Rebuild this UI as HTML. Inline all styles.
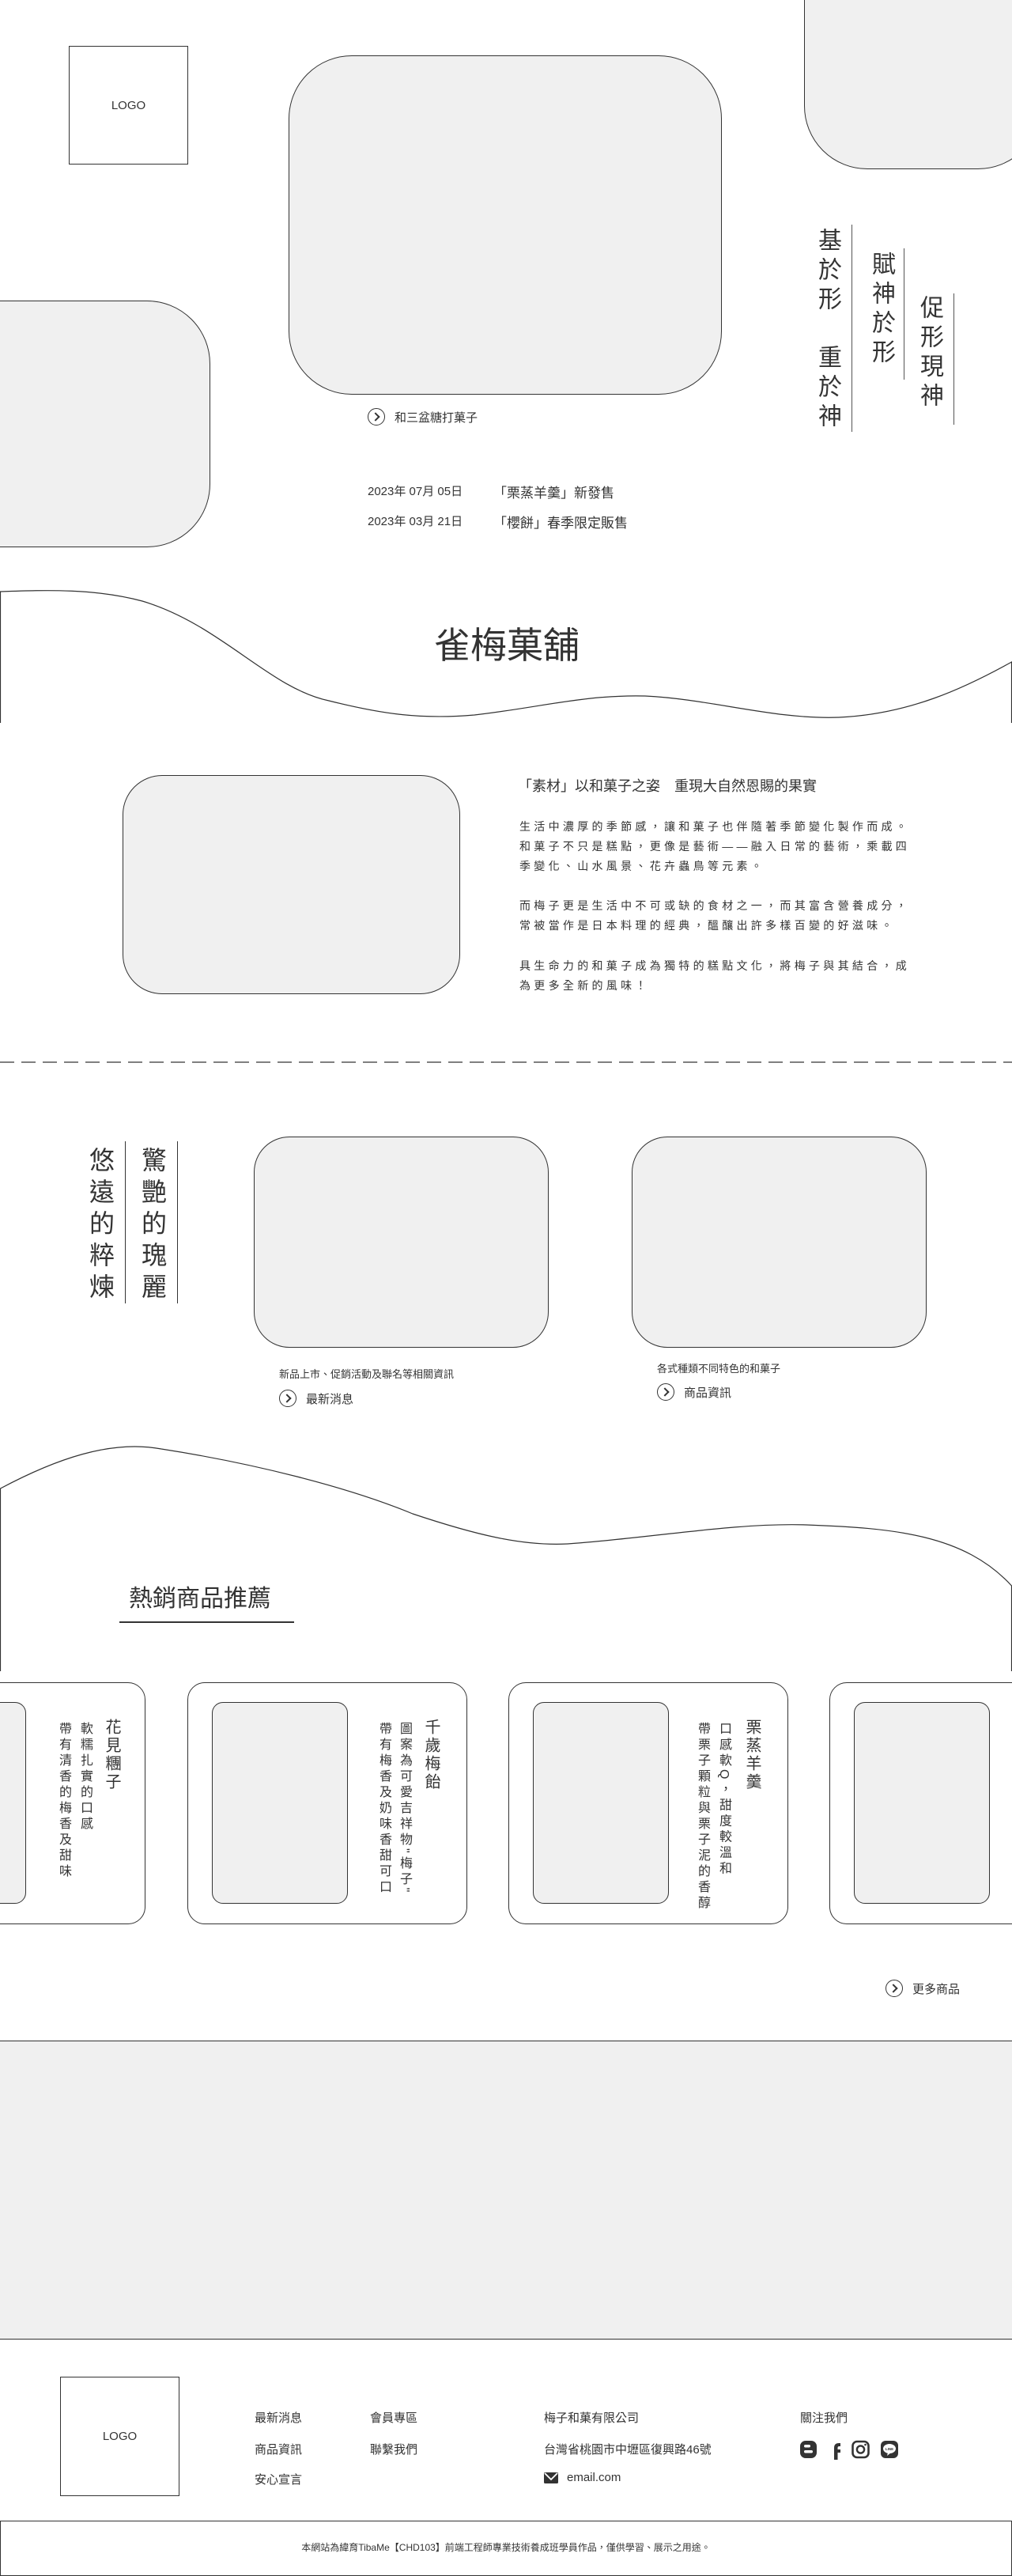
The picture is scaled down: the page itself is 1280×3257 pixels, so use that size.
<!DOCTYPE html>
<html><head><meta charset="utf-8">
<style>
*{margin:0;padding:0;box-sizing:border-box}
body{width:1280px;height:3251px;position:relative;background:#fff;color:#333;font-family:"Liberation Sans","Noto Sans CJK TC",sans-serif;overflow:hidden}
.a{position:absolute}
.img{position:absolute;background:#f0f0f0;border:1px solid #333}
.v{position:absolute;writing-mode:vertical-rl;white-space:nowrap}
.btn{position:absolute;display:flex;align-items:center;font-size:15px;white-space:nowrap}
.btn i{display:inline-block;width:22px;height:22px;border:1.5px solid #333;border-radius:50%;margin-right:12px;position:relative}
.btn i:after{content:"";position:absolute;left:5px;top:6px;width:6px;height:6px;border-right:2px solid #333;border-top:2px solid #333;transform:rotate(45deg)}
.p{font-size:14px;letter-spacing:4.3px;line-height:25px;white-space:nowrap}
.foot{position:absolute;font-size:15px;white-space:nowrap}
</style></head><body>

<div class="a" style="left:87px;top:58px;width:151px;height:150px;border:1px solid #333;display:flex;align-items:center;justify-content:center;font-size:15px">LOGO</div>
<div class="img" style="left:365px;top:70px;width:548px;height:429px;border-radius:80px"></div>
<div class="img" style="left:1017px;top:-90px;width:300px;height:304px;border-radius:80px"></div>
<div class="img" style="left:-100px;top:380px;width:366px;height:312px;border-radius:80px"></div>
<div class="btn" style="left:465px;top:516px"><i></i>和三盆糖打菓子</div>
<div class="a" style="left:465px;top:610px;font-size:15px;white-space:nowrap">2023年 07月 05日</div>
<div class="a" style="left:624px;top:609px;font-size:17px;white-space:nowrap">「栗蒸羊羹」新發售</div>
<div class="a" style="left:465px;top:648px;font-size:15px;white-space:nowrap">2023年 03月 21日</div>
<div class="a" style="left:624px;top:647px;font-size:17px;white-space:nowrap">「櫻餅」春季限定販售</div>

<div class="v" style="left:1029px;top:288px;font-size:30px;letter-spacing:7px;line-height:34px">基於形　重於神</div>
<div class="a" style="left:1077px;top:284px;width:1px;height:262px;background:#555"></div>
<div class="v" style="left:1097px;top:318px;font-size:30px;letter-spacing:7px;line-height:34px">賦神於形</div>
<div class="a" style="left:1143px;top:314px;width:1px;height:166px;background:#555"></div>
<div class="v" style="left:1158px;top:373px;font-size:30px;letter-spacing:7px;line-height:34px">促形現神</div>
<div class="a" style="left:1206px;top:371px;width:1px;height:166px;background:#555"></div>

<svg class="a" style="left:0;top:0" width="1280" height="3251" viewBox="0 0 1280 3251">
<g fill="none" stroke="#333" stroke-width="1.2">
<path d="M0.5,914 V748 C60,746 120,744 180,760 C280,790 340,870 416,886 C480,902 530,910 600,904 C680,895 740,878 816,880 C900,884 980,910 1061,907 C1150,903 1220,870 1279.5,837 V914"/>
<path d="M0.5,2113 V1882 C70,1845 140,1820 204,1832 C320,1850 440,1880 522,1914 C600,1940 660,1955 718,1952 C820,1945 930,1925 1020,1928 C1130,1932 1220,1940 1279.5,2005 V2113"/>
<line x1="0" y1="1343" x2="1280" y2="1343" stroke-dasharray="18 9"/>
</g>
</svg>
<div class="a" style="left:0;width:1280px;top:780px;text-align:center;font-size:46px;padding-left:2px">雀梅菓舖</div>

<div class="img" style="left:155px;top:980px;width:427px;height:277px;border-radius:50px"></div>
<div class="a" style="left:655px;top:980px;font-size:18px;white-space:nowrap">「素材」以和菓子之姿　重現大自然恩賜的果實</div>
<div class="a p" style="left:657px;top:1033px">生活中濃厚的季節感，讓和菓子也伴隨著季節變化製作而成。<br>和菓子不只是糕點，更像是藝術——融入日常的藝術，乘載四<br>季變化、山水風景、花卉蟲鳥等元素。</div>
<div class="a p" style="left:657px;top:1133px">而梅子更是生活中不可或缺的食材之一，而其富含營養成分，<br>常被當作是日本料理的經典，醞釀出許多樣百變的好滋味。</div>
<div class="a p" style="left:657px;top:1209px">具生命力的和菓子成為獨特的糕點文化，將梅子與其結合，成<br>為更多全新的風味！</div>

<div class="v" style="left:109px;top:1450px;font-size:32px;letter-spacing:8px;line-height:36px">悠遠的粹煉</div>
<div class="a" style="left:158px;top:1443px;width:1px;height:205px;background:#333"></div>
<div class="v" style="left:175px;top:1450px;font-size:32px;letter-spacing:8px;line-height:36px">驚艷的瑰麗</div>
<div class="a" style="left:224px;top:1443px;width:1px;height:205px;background:#333"></div>
<div class="img" style="left:321px;top:1437px;width:373px;height:267px;border-radius:45px"></div>
<div class="img" style="left:799px;top:1437px;width:373px;height:267px;border-radius:45px"></div>
<div class="a" style="left:353px;top:1727px;font-size:13px;white-space:nowrap">新品上市、促銷活動及聯名等相關資訊</div>
<div class="btn" style="left:353px;top:1757px"><i></i>最新消息</div>
<div class="a" style="left:831px;top:1720px;font-size:13px;white-space:nowrap">各式種類不同特色的和菓子</div>
<div class="btn" style="left:831px;top:1749px"><i></i>商品資訊</div>

<div class="a" style="left:163px;top:1996px;font-size:30px;white-space:nowrap">熱銷商品推薦</div>
<div class="a" style="left:151px;top:2050px;width:221px;height:1.5px;background:#333"></div>

<div class="a" style="left:-170px;top:2127px;width:354px;height:306px;border:1px solid #333;border-radius:22px"></div>
<div class="img" style="left:-140px;top:2152px;width:173px;height:255px;border-radius:14px"></div>
<div class="v" style="left:130px;top:2173px;font-size:20px;letter-spacing:3px;line-height:22px">花見糰子</div>
<div class="v" style="left:98px;top:2177px;font-size:16px;letter-spacing:4px;line-height:18px">軟糯扎實的口感</div>
<div class="v" style="left:71px;top:2177px;font-size:16px;letter-spacing:4px;line-height:18px">帶有清香的梅香及甜味</div>

<div class="a" style="left:237px;top:2127px;width:354px;height:306px;border:1px solid #333;border-radius:22px"></div>
<div class="img" style="left:268px;top:2152px;width:172px;height:255px;border-radius:14px"></div>
<div class="v" style="left:534px;top:2173px;font-size:20px;letter-spacing:3px;line-height:22px">千歲梅飴</div>
<div class="v" style="left:502px;top:2177px;font-size:16px;letter-spacing:4px;line-height:18px">圖案為可愛吉祥物"梅子"</div>
<div class="v" style="left:476px;top:2177px;font-size:16px;letter-spacing:4px;line-height:18px">帶有梅香及奶味香甜可口</div>

<div class="a" style="left:643px;top:2127px;width:354px;height:306px;border:1px solid #333;border-radius:22px"></div>
<div class="img" style="left:674px;top:2152px;width:172px;height:255px;border-radius:14px"></div>
<div class="v" style="left:940px;top:2173px;font-size:20px;letter-spacing:3px;line-height:22px">栗蒸羊羹</div>
<div class="v" style="left:906px;top:2177px;font-size:16px;letter-spacing:4px;line-height:18px">口感軟Q，甜度較溫和</div>
<div class="v" style="left:879px;top:2177px;font-size:16px;letter-spacing:4px;line-height:18px">帶栗子顆粒與栗子泥的香醇</div>

<div class="a" style="left:1049px;top:2127px;width:354px;height:306px;border:1px solid #333;border-radius:22px"></div>
<div class="img" style="left:1080px;top:2152px;width:172px;height:255px;border-radius:14px"></div>

<div class="btn" style="left:1120px;top:2503px"><i></i>更多商品</div>

<div class="img" style="left:0;top:2580px;width:1280px;height:378px;border-left:none;border-right:none"></div>

<div class="a" style="left:76px;top:3005px;width:151px;height:151px;border:1px solid #333;display:flex;align-items:center;justify-content:center;font-size:15px">LOGO</div>
<div class="foot" style="left:322px;top:3046px">最新消息</div>
<div class="foot" style="left:322px;top:3086px">商品資訊</div>
<div class="foot" style="left:322px;top:3124px">安心宣言</div>
<div class="foot" style="left:468px;top:3046px">會員專區</div>
<div class="foot" style="left:468px;top:3086px">聯繫我們</div>
<div class="foot" style="left:688px;top:3046px">梅子和菓有限公司</div>
<div class="foot" style="left:688px;top:3086px">台灣省桃園市中壢區復興路46號</div>
<div class="foot" style="left:688px;top:3124px;display:flex;align-items:center"><svg width="18" height="16" viewBox="0 0 18 16" style="margin-right:11px"><rect x="0" y="1" width="18" height="14" rx="1.5" fill="#333"/><path d="M1 2 L9 10 L17 2" stroke="#fff" stroke-width="1.8" fill="none"/></svg>email.com</div>
<div class="foot" style="left:1012px;top:3046px">關注我們</div>
<svg class="a" style="left:1012px;top:3085px" width="126" height="25" viewBox="0 0 126 25">
<rect x="0" y="1" width="21" height="22" rx="7" fill="#333"/>
<rect x="5" y="6" width="8" height="3.5" rx="1.7" fill="#fff"/><rect x="5" y="13" width="11" height="3.5" rx="1.7" fill="#fff"/>
<path d="M43 25 V10 Q43 4 49 4 H51 V8 H49.5 Q47.5 8 47.5 10 V12 H51 V16 H47.5 V25 Z" fill="#333"/>
<rect x="66.5" y="2" width="20" height="20" rx="5.5" fill="none" stroke="#333" stroke-width="2.6"/>
<circle cx="76.5" cy="12" r="4.6" fill="none" stroke="#333" stroke-width="2.4"/>
<circle cx="82.5" cy="6" r="1.3" fill="#333"/>
<rect x="102" y="1" width="22" height="22" rx="6" fill="#333"/>
<ellipse cx="113" cy="11" rx="8" ry="6" fill="#fff"/>
<path d="M111 16 L110 20 L115 16 Z" fill="#fff"/>
<text x="113" y="13" font-size="4.5" text-anchor="middle" fill="#333" font-family="Liberation Sans" font-weight="bold">LINE</text>
</svg>
<div class="a" style="left:0;top:3187px;width:1280px;height:70px;border:1px solid #333;display:flex;justify-content:center;padding-top:24px;font-size:12px;white-space:nowrap">本網站為緯育TibaMe【CHD103】前端工程師專業技術養成班學員作品，僅供學習、展示之用途。</div>
</body></html>
